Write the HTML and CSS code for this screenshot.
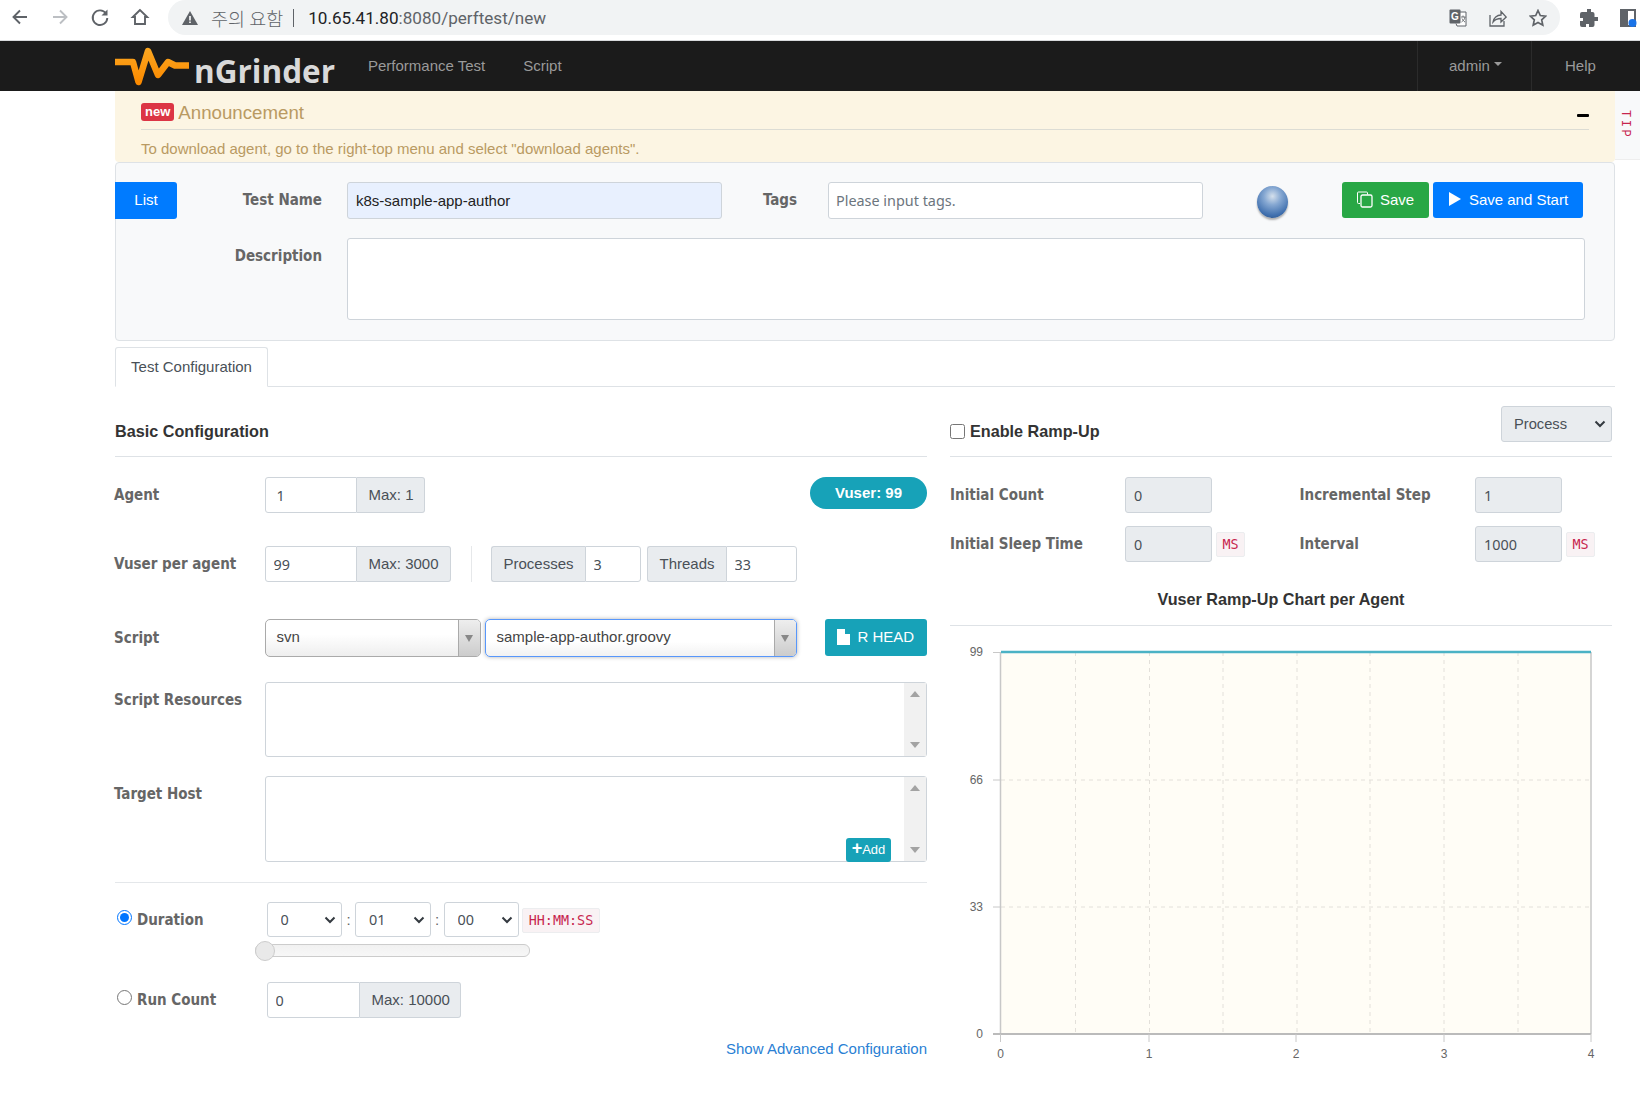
FILE: index.html
```html
<!DOCTYPE html>
<html lang="en">
<head>
    <meta charset="UTF-8">
    <title>nGrinder - Performance Test</title>
    <link rel="stylesheet" href="styles.css">
</head>
<body>
    <!-- Browser toolbar -->
    <div class="browser-bar">
        <svg class="tool" width="20" height="20" viewBox="0 0 20 20"><path d="M17 10H4M10 3.5 3.5 10l6.500 6.500" fill="none" stroke="#5f6368" stroke-width="1.900"/></svg>
        <svg class="tool" width="20" height="20" viewBox="0 0 20 20"><path d="M3 10h13M10 3.500l6.500 6.500-6.500 6.500" fill="none" stroke="#bcbfc3" stroke-width="1.900"/></svg>
        <svg class="tool" width="20" height="20" viewBox="0 0 20 20"><path d="M16 6.500A7.300 7.300 0 1 0 17.300 11" fill="none" stroke="#5f6368" stroke-width="1.900"/><path d="M17.500 2.500v6h-6z" fill="#5f6368"/></svg>
        <svg class="tool" width="20" height="20" viewBox="0 0 20 20"><path d="M10 3 2.800 10H5v7h10v-7h2.200z" fill="none" stroke="#5f6368" stroke-width="1.900"/></svg>
        <div class="address">
            <svg width="16" height="14" viewBox="0 0 16 14"><path d="M8 0 16 14H0z" fill="#5f6368"/><path d="M7.200 5h1.600v4.500H7.200zM7.200 10.500h1.600V12H7.200z" fill="#fff"/></svg>
            <span class="warn">주의 요함</span>
            <span class="sep"></span>
            <span class="url">10.65.41.80<span class="url-dim">:8080/perftest/new</span></span>
            <div class="address-icons">
                <svg width="18" height="18" viewBox="0 0 18 18"><path d="M11 3h6v14H8l-1-2.500" fill="#fff" stroke="#5f6368"/><rect x="0.500" y="0.500" width="11" height="14" rx="1" fill="#5f6368"/><text class="g-mark" x="6" y="11" text-anchor="middle">G</text><path d="M12 8h4.500M14 6.500V8M16 8c-.5 2.500-1.800 4-3.500 5M13 9.500c.6 1.500 1.500 2.600 3 3.500" fill="none" stroke="#5f6368" stroke-width="0.900"/></svg>
                <svg width="18" height="18" viewBox="0 0 18 18"><path d="M1 6v11h14v-5M4 13c.5-4 4-7 8-7V2.500L17.200 8 12 13V9.500c-3 0-6 1-8 3.500z" fill="none" stroke="#5f6368" stroke-width="1.300"/></svg>
                <svg width="18" height="18" viewBox="0 0 18 18"><path d="M9 1.500l2.300 5 5.400.6-4 3.700 1.100 5.400L9 13.500l-4.800 2.700 1.100-5.400-4-3.700 5.400-.6z" fill="none" stroke="#5f6368" stroke-width="1.700"/></svg>
            </div>
        </div>
        <div class="browser-end">
            <svg width="18" height="18" viewBox="0 0 18 18"><path d="M7 0h4v3h1.500a2 2 0 0 1 2 2v3h3.500v4h-3.500v4a2 2 0 0 1-2 2H9v-3H6v3H2a2 2 0 0 1-2-2v-4h3v-3H0V5a2 2 0 0 1 2-2h5z" fill="#5f6368"/></svg>
            <svg width="17" height="18" viewBox="0 0 17 18"><path d="M1 1h14v16H1z" fill="#fff" stroke="#5f6368" stroke-width="2"/><rect x="0" y="0" width="8" height="18" fill="#5f6368"/><circle cx="12.500" cy="14" r="4" fill="#1a73e8"/></svg>
        </div>
    </div>

    <!-- Navbar -->
    <div class="navbar">
        <svg class="logo-mark" width="76" height="44" viewBox="0 0 76 44"><defs><linearGradient id="logoGrad" x1="0" y1="0" x2="0" y2="1"><stop offset="0" stop-color="#fba51f"/><stop offset="1" stop-color="#fb8a00"/></linearGradient></defs><path d="M0 16H18L23.500 36 33 5 43 29 53 16 60 19.500H74" fill="none" stroke="url(#logoGrad)" stroke-width="6.500" stroke-linejoin="round"/></svg>
        <span class="logo-text">nGrinder</span>
        <a class="nav-link first">Performance Test</a>
        <a class="nav-link">Script</a>
        <div class="nav-right">
            <div class="nav-cell admin">admin<span class="caret"></span></div>
            <div class="nav-cell help">Help</div>
        </div>
    </div>

    <div class="page">
        <div class="top-row">
            <div class="notice">
                <div class="notice-head">
                    <span class="badge-new">new</span>
                    <span class="notice-title">Announcement</span>
                    <span class="collapse-bar"></span>
                </div>
                <div class="notice-text">To download agent, go to the right-top menu and select "download agents".</div>
            </div>
            <div class="tip">TIP</div>
        </div>

        <!-- Test name panel -->
        <div class="name-panel">
            <div class="name-row">
                <a class="btn btn-blue btn-list">List</a>
                <label class="name-label label-testname">Test Name</label>
                <input class="field field-name" type="text" value="k8s-sample-app-author">
                <label class="name-label label-tags">Tags</label>
                <input class="field field-tags" type="text" placeholder="Please input tags.">
                <span class="ball"></span>
                <a class="btn btn-green btn-save">
                    <svg width="16" height="17" viewBox="0 0 16 17"><path d="M3 12.500H1.500a1 1 0 0 1-1-1V2a1 1 0 0 1 1-1h8a1 1 0 0 1 1 1v1.500" fill="none" stroke="#fff"/><rect x="4" y="4" width="11" height="12" rx="1.500" fill="none" stroke="#fff" stroke-width="1.300"/></svg>
                    Save
                </a>
                <a class="btn btn-blue btn-start">
                    <svg width="14" height="14" viewBox="0 0 14 14"><path d="M1 0 13 7 1 14z" fill="#fff"/></svg>
                    Save and Start
                </a>
            </div>
            <div class="desc-row">
                <label class="name-label label-desc">Description</label>
                <textarea class="field field-desc"></textarea>
            </div>
        </div>

        <div class="tabs">
            <div class="tab">Test Configuration</div>
        </div>

        <div class="columns">
            <!-- Basic configuration -->
            <div class="col-left">
                <div class="section-head">Basic Configuration</div>

                <div class="form-row row-agent">
                    <label class="row-label">Agent</label>
                    <div class="group">
                        <input class="field in-w92 pad-11" type="text" value="1">
                        <span class="addon addon-agent">Max: 1</span>
                    </div>
                    <span class="vuser-pill">Vuser: 99</span>
                </div>

                <div class="form-row row-vuser">
                    <label class="row-label">Vuser per agent</label>
                    <div class="group">
                        <input class="field in-w92" type="text" value="99">
                        <span class="addon addon-vuser">Max: 3000</span>
                    </div>
                    <span class="v-divider"></span>
                    <div class="group">
                        <span class="addon addon-left addon-proc">Processes</span>
                        <input class="field in-w56" type="text" value="3">
                    </div>
                    <div class="group group-threads">
                        <span class="addon addon-left addon-thread">Threads</span>
                        <input class="field in-w71" type="text" value="33">
                    </div>
                </div>

                <div class="form-row row-script">
                    <label class="row-label">Script</label>
                    <div class="chosen chosen-svn">
                        <span class="chosen-text">svn</span>
                        <span class="chosen-arrow"></span>
                    </div>
                    <div class="chosen chosen-file">
                        <span class="chosen-text">sample-app-author.groovy</span>
                        <span class="chosen-arrow"></span>
                    </div>
                    <a class="btn btn-teal btn-head">
                        <svg width="13" height="16" viewBox="0 0 13 16"><path d="M0 0h8l5 5v11H0zM8 0v5h5" fill="#fff"/><path d="M8.500 0v4.500H13" fill="none" stroke="#17a2b8"/></svg>
                        R HEAD
                    </a>
                </div>

                <div class="form-row row-resources">
                    <label class="row-label label-top">Script Resources</label>
                    <div class="scroll-box box-resources">
                        <div class="scroll-strip"><span class="arrow-up"></span><span class="arrow-down"></span></div>
                    </div>
                </div>

                <div class="form-row row-host">
                    <label class="row-label label-top">Target Host</label>
                    <div class="scroll-box box-host">
                        <a class="btn-add"><b>+</b>Add</a>
                        <div class="scroll-strip"><span class="arrow-up"></span><span class="arrow-down"></span></div>
                    </div>
                </div>

                <div class="rule"></div>

                <div class="form-row row-duration">
                    <label class="radio-label"><input type="radio" name="mode" checked>Duration</label>
                    <span class="sel-wrap">
                        <select class="time-select"><option>0</option></select>
                        <svg class="chevron" width="12" height="8" viewBox="0 0 12 8"><path d="M1.500 1.500 6 6l4.500-4.500" fill="none" stroke="#343a40" stroke-width="2"/></svg>
                    </span>
                    <span class="colon">:</span>
                    <span class="sel-wrap">
                        <select class="time-select"><option>01</option></select>
                        <svg class="chevron" width="12" height="8" viewBox="0 0 12 8"><path d="M1.500 1.500 6 6l4.500-4.500" fill="none" stroke="#343a40" stroke-width="2"/></svg>
                    </span>
                    <span class="colon">:</span>
                    <span class="sel-wrap">
                        <select class="time-select"><option>00</option></select>
                        <svg class="chevron" width="12" height="8" viewBox="0 0 12 8"><path d="M1.500 1.500 6 6l4.500-4.500" fill="none" stroke="#343a40" stroke-width="2"/></svg>
                    </span>
                    <code class="unit unit-time">HH:MM:SS</code>
                </div>
                <div class="slider"><span class="slider-thumb"></span></div>

                <div class="form-row row-count">
                    <label class="radio-label"><input type="radio" name="mode">Run Count</label>
                    <div class="group">
                        <input class="field in-w93" type="text" value="0">
                        <span class="addon addon-count">Max: 10000</span>
                    </div>
                </div>

                <div class="advanced"><a>Show Advanced Configuration</a></div>
            </div>

            <!-- Ramp-up -->
            <div class="col-right">
                <div class="ramp-head">
                    <label class="ramp-check"><input type="checkbox">Enable Ramp-Up</label>
                    <span class="sel-wrap ramp-wrap">
                        <select class="ramp-select"><option>Process</option></select>
                        <svg class="chevron" width="12" height="8" viewBox="0 0 12 8"><path d="M1.500 1.500 6 6l4.500-4.500" fill="none" stroke="#343a40" stroke-width="2"/></svg>
                    </span>
                </div>

                <div class="ramp-row first-ramp">
                    <label class="ramp-label">Initial Count</label>
                    <input class="field ramp-input" type="text" value="0" disabled>
                    <span class="ramp-gap"></span>
                    <label class="ramp-label second">Incremental Step</label>
                    <input class="field ramp-input" type="text" value="1" disabled>
                </div>
                <div class="ramp-row">
                    <label class="ramp-label">Initial Sleep Time</label>
                    <input class="field ramp-input" type="text" value="0" disabled>
                    <code class="unit unit-ms">MS</code>
                    <span class="ramp-gap short"></span>
                    <label class="ramp-label second">Interval</label>
                    <input class="field ramp-input" type="text" value="1000" disabled>
                    <code class="unit unit-ms">MS</code>
                </div>

                <div class="chart-title">Vuser Ramp-Up Chart per Agent</div>
                <svg class="chart" width="662" height="450" viewBox="0 0 662 450">
                    <rect x="51" y="26" width="590" height="382" fill="#fffdf6"/>
                    <g stroke="#e3e0da" stroke-dasharray="4 4" fill="none">
                        <path d="M125.500 26V408M199.500 26V408M273 26V408M347 26V408M420 26V408M494 26V408M568 26V408"/>
                        <path d="M51 154H641M51 281H641"/>
                    </g>
                    <path d="M50.500 26V408M641 26V408" stroke="#c8c8c8" stroke-width="1.500" fill="none"/>
                    <path d="M43 408H641" stroke="#bbb" stroke-width="2" fill="none"/>
                    <path d="M43 26.500H51M43 154H51M43 281H51M50.500 408v8M199 408v8M346 408v8M494 408v8M641 408v8" stroke="#c8c8c8" fill="none"/>
                    <path d="M51 26H641" stroke="#4bb2c5" stroke-width="2.500" fill="none"/>
                    <g class="chart-text">
                        <text x="33" y="30" text-anchor="end">99</text>
                        <text x="33" y="158" text-anchor="end">66</text>
                        <text x="33" y="285" text-anchor="end">33</text>
                        <text x="33" y="412" text-anchor="end">0</text>
                        <text x="50.500" y="432" text-anchor="middle">0</text>
                        <text x="199" y="432" text-anchor="middle">1</text>
                        <text x="346" y="432" text-anchor="middle">2</text>
                        <text x="494" y="432" text-anchor="middle">3</text>
                        <text x="641" y="432" text-anchor="middle">4</text>
                    </g>
                </svg>
            </div>
        </div>
    </div>
</body>
</html>
```

FILE: styles.css
```css
/* Page base */
* {
    box-sizing: border-box;
}

html, body {
    margin: 0;
    padding: 0;
    background-color: #fff;
}

body {
    width: 1640px;
    height: 1097px;
    overflow: hidden;
    font-family: "Liberation Sans", Arial, sans-serif;
    font-size: 15px;
    color: #495057;
}

/* Browser toolbar */
.browser-bar {
    display: flex;
    align-items: flex-start;
    height: 41px;
    padding-left: 10px;
    border-bottom: 1px solid #d8dadd;
    background-color: #fff;
}

.tool {
    margin: 7px 20px 0 0;
}

.address {
    display: flex;
    align-items: center;
    width: 1392px;
    height: 35px;
    margin-left: -2px;
    padding-left: 14px;
    border-radius: 0 0 18px 18px;
    border-top-left-radius: 18px;
    border-top-right-radius: 18px;
    background-color: #f1f3f4;
}

.warn {
    margin-left: 13px;
    font-family: "Noto Sans CJK KR", sans-serif;
    font-size: 18.500px;
    font-weight: 300;
    color: #5f6368;
}

.sep {
    width: 1px;
    height: 18px;
    margin: 0 14px 0 10px;
    background-color: #5f6368;
}

.url {
    font-family: "Roboto", sans-serif;
    font-size: 17.100px;
    color: #202124;
}

.url-dim {
    color: #5f6368;
}

.address-icons {
    display: flex;
    gap: 22px;
    margin-left: auto;
    margin-right: 13px;
}

.g-mark {
    font-family: "Liberation Sans", Arial, sans-serif;
    font-size: 10px;
    font-weight: 700;
    fill: #fff;
}

.browser-end {
    display: flex;
    align-items: center;
    gap: 22px;
    height: 35px;
    margin-left: 20px;
}

/* Navbar */
.navbar {
    display: flex;
    align-items: center;
    height: 50px;
    padding-left: 115px;
    background-color: #1b1b1b;
}

.logo-mark {
    margin-top: 3px;
}

.logo-text {
    margin-left: 3px;
    margin-top: 9px;
    font-family: "Open Sans", sans-serif;
    font-weight: 700;
    font-size: 31.500px;
    line-height: 40px;
    color: #d9d9d9;
}

.nav-link {
    padding-bottom: 2px;
    font-size: 15px;
    color: #9a9a9a;
    margin-left: 38px;
}

.nav-link.first {
    margin-left: 33px;
}

.nav-right {
    display: flex;
    height: 100%;
    margin-left: auto;
}

.nav-cell {
    display: flex;
    align-items: center;
    height: 100%;
    padding-bottom: 2px;
    font-size: 15px;
    color: #9a9a9a;
}

.admin {
    width: 115px;
    padding-left: 31px;
    border-left: 1px solid #2b2b2b;
    border-right: 1px solid #2b2b2b;
}

.help {
    width: 108px;
    padding-left: 33px;
}

.caret {
    width: 0;
    height: 0;
    margin: -3px 0 0 4px;
    border-left: 4px solid transparent;
    border-right: 4px solid transparent;
    border-top: 4px solid #9a9a9a;
}

/* Main page */
.page {
    margin-left: 115px;
    width: 1525px;
}

.top-row {
    display: flex;
}

.notice {
    width: 1500px;
    height: 71px;
    padding: 0 26px;
    background-color: #fcf5e3;
    border-radius: 0 0 4px 4px;
}

.notice-head {
    display: flex;
    align-items: center;
    height: 39px;
    padding-top: 3px;
    border-bottom: 1px solid #dcdcd4;
}

.badge-new {
    padding: 0 4px;
    height: 18px;
    line-height: 18px;
    border-radius: 3px;
    background-color: #dc3545;
    color: #fff;
    font-size: 13px;
    font-weight: 700;
}

.notice-title {
    margin-left: 4px;
    margin-top: 3px;
    font-size: 18.700px;
    color: #b99a62;
}

.collapse-bar {
    width: 12px;
    height: 3px;
    margin-top: 7px;
    margin-left: auto;
    background-color: #000;
    border-radius: 1px;
}

.notice-text {
    margin-top: 9px;
    font-size: 15px;
    line-height: 20px;
    color: #b99a62;
}

.tip {
    width: 25px;
    height: 69px;
    padding: 19px 8px 0 0;
    background-color: #f8f9fa;
    border-bottom: 1px solid #eee;
    writing-mode: vertical-rl;
    font-family: "Liberation Mono", monospace;
    font-size: 12px;
    letter-spacing: 2.500px;
    color: #c7254e;
}

/* Name panel */
.name-panel {
    width: 1500px;
    height: 179px;
    padding-top: 19px;
    background-color: #f8f9fa;
    border: 1px solid #dee2e6;
    border-radius: 4px;
}

.name-row {
    display: flex;
    align-items: flex-start;
}

.name-label {
    font-family: "DejaVu Sans Condensed", "DejaVu Sans", sans-serif;
    font-weight: 700;
    font-size: 15px;
    line-height: 22px;
    color: #666;
    text-align: right;
}

.label-testname {
    width: 145px;
    margin-top: 7px;
    margin-right: 25px;
}

.label-tags {
    width: 36px;
    margin: 7px 31px 0 39px;
}

.label-desc {
    width: 206px;
    margin-top: 7px;
    margin-right: 25px;
}

.desc-row {
    display: flex;
    margin-top: 19px;
}

.field {
    height: 36px;
    padding: 0 8px;
    border: 1px solid #ced4da;
    border-radius: 3px;
    background-color: #fff;
    font-family: "Noto Sans", sans-serif;
    font-size: 14.400px;
    color: #495057;
    outline: none;
}

.field::placeholder {
    color: #6c757d;
}

.field-name {
    width: 375px;
    height: 37px;
    background-color: #e8f0fe;
    font-family: "Liberation Sans", Arial, sans-serif;
    font-size: 15px;
    color: #222;
}

.field-tags {
    width: 375px;
    height: 37px;
    padding-left: 7px;
}

.field-desc {
    width: 1238px;
    height: 82px;
    resize: none;
}

.ball {
    width: 31px;
    height: 32px;
    margin: 4px 54px 0 54px;
    border-radius: 50%;
    background: radial-gradient(circle at 50% 32%, #d5e0ec 0%, #86a8d2 32%, #3f6fae 72%, #2a4a78 100%);
    box-shadow: 0 2px 2px rgba(0, 0, 0, 0.3);
}

.btn {
    display: flex;
    align-items: center;
    justify-content: center;
    padding-bottom: 2px;
    color: #fff;
    border-radius: 3px;
    font-size: 15px;
}

.btn-blue {
    background-color: #007bff;
}

.btn-green {
    background-color: #28a745;
}

.btn-teal {
    background-color: #17a2b8;
}

.btn-list {
    width: 62px;
    height: 37px;
    margin-left: -1px;
    border-radius: 0 3px 3px 0;
}

.btn-save {
    width: 87px;
    height: 36px;
    gap: 7px;
    margin-right: 4px;
}

.btn-start {
    width: 150px;
    height: 36px;
    gap: 7px;
}

/* Tabs */
.tabs {
    display: flex;
    width: 1500px;
    height: 40px;
    margin-top: 6px;
    border-bottom: 1px solid #dee2e6;
}

.tab {
    width: 153px;
    height: 40px;
    line-height: 38px;
    text-align: center;
    font-size: 15px;
    color: #495057;
    background-color: #fff;
    border: 1px solid #dee2e6;
    border-bottom-color: #fff;
    border-radius: 3px 3px 0 0;
}

/* Columns */
.columns {
    display: flex;
}

.col-left {
    width: 812px;
}

.col-right {
    width: 662px;
    margin-left: 23px;
}

.section-head {
    height: 70px;
    padding-top: 32px;
    border-bottom: 1px solid #dee2e6;
    font-size: 16.200px;
    font-weight: 700;
    line-height: 24px;
    color: #333;
}

.form-row {
    display: flex;
    align-items: center;
}

.row-label {
    width: 150.500px;
    margin-left: -1px;
    flex: none;
    font-family: "DejaVu Sans Condensed", "DejaVu Sans", sans-serif;
    font-weight: 700;
    font-size: 15px;
    color: #666;
}

.label-top {
    align-self: flex-start;
    margin-top: 9px;
}

.row-agent {
    height: 36px;
    margin-top: 20px;
}

.row-vuser {
    height: 36px;
    margin-top: 33px;
}

.row-script {
    height: 38px;
    margin-top: 37px;
}

.row-resources {
    height: 75px;
    margin-top: 25px;
}

.row-host {
    height: 86px;
    margin-top: 19px;
}

.row-duration {
    height: 35px;
    margin-top: 19px;
}

.row-count {
    height: 36px;
    margin-top: 25px;
}

.group {
    display: flex;
}

.group .field {
    border-radius: 0 3px 3px 0;
}

.group .field:first-child {
    border-radius: 3px 0 0 3px;
}

.in-w92 {
    width: 92px;
}

.in-w93 {
    width: 93px;
}

.in-w56 {
    width: 56px;
}

.in-w71 {
    width: 71.500px;
}

.pad-11 {
    padding-left: 11px;
}

.addon {
    display: flex;
    align-items: center;
    height: 36px;
    padding: 0 0 2px 12px;
    background-color: #e9ecef;
    border: 1px solid #ced4da;
    border-left: none;
    border-radius: 0 3px 3px 0;
    font-size: 15px;
    color: #495057;
}

.addon-left {
    border-left: 1px solid #ced4da;
    border-right: none;
    border-radius: 3px 0 0 3px;
}

.addon-agent {
    width: 68px;
}

.addon-vuser {
    width: 94px;
}

.addon-proc {
    width: 94px;
}

.addon-thread {
    width: 79px;
}

.addon-count {
    width: 101px;
}

.group-threads {
    margin-left: 6px;
}

.vuser-pill {
    width: 117px;
    height: 32px;
    line-height: 32px;
    align-self: flex-start;
    margin-left: auto;
    border-radius: 16px;
    background-color: #17a2b8;
    color: #fff;
    text-align: center;
    font-weight: 700;
    font-size: 15px;
}

.v-divider {
    width: 1px;
    height: 36px;
    margin: 0 19px 0 20px;
    background-color: #e6e8ea;
}

/* Chosen style dropdowns */
.chosen {
    display: flex;
    align-items: center;
    height: 38px;
    border: 1px solid #aaa;
    border-radius: 5px;
    background: linear-gradient(#fff 40%, #eee 100%);
    overflow: hidden;
}

.chosen-svn {
    width: 216px;
    margin-right: 4px;
}

.chosen-file {
    width: 312px;
    border-color: #5897fb;
    box-shadow: 0 0 4px rgba(0, 0, 0, 0.3);
    background: linear-gradient(#fff 60%, #f2f2f2 100%);
}

.chosen-text {
    flex: 1;
    padding: 0 0 3px 11px;
    font-size: 15px;
    color: #444;
}

.chosen-arrow {
    position: relative;
    width: 22px;
    height: 100%;
    border-left: 1px solid #aaa;
    background: linear-gradient(#eee, #ccc);
}

.chosen-arrow::after {
    content: "";
    position: absolute;
    left: 6px;
    top: 15px;
    border-left: 4px solid transparent;
    border-right: 4px solid transparent;
    border-top: 7px solid #888;
}

.btn-head {
    width: 102.500px;
    height: 37px;
    gap: 7px;
    margin-left: auto;
    align-self: flex-start;
}

/* Text boxes with scrollbar */
.scroll-box {
    position: relative;
    display: flex;
    justify-content: flex-end;
    width: 662.500px;
    height: 100%;
    border: 1px solid #ced4da;
    border-radius: 3px;
    background-color: #fff;
}

.scroll-strip {
    display: flex;
    flex-direction: column;
    justify-content: space-between;
    align-items: center;
    width: 22px;
    height: 100%;
    padding: 8px 0;
    background-color: #f1f1f1;
}

.arrow-up {
    border-left: 5px solid transparent;
    border-right: 5px solid transparent;
    border-bottom: 6px solid #a3a3a3;
}

.arrow-down {
    border-left: 5px solid transparent;
    border-right: 5px solid transparent;
    border-top: 6px solid #a3a3a3;
}

.btn-add {
    position: absolute;
    right: 35px;
    bottom: -1px;
    width: 45px;
    height: 24px;
    line-height: 24px;
    text-align: center;
    border-radius: 3px;
    background-color: #17a2b8;
    color: #fff;
    font-size: 13px;
}

.btn-add b {
    font-size: 18px;
    line-height: 20px;
}

.rule {
    height: 1px;
    margin-top: 20px;
    background-color: #e4e7ea;
}

/* Duration */
.radio-label {
    display: flex;
    align-items: center;
    width: 151.500px;
    height: 24px;
    flex: none;
    font-family: "DejaVu Sans Condensed", "DejaVu Sans", sans-serif;
    font-weight: 700;
    font-size: 15px;
    color: #666;
}

.radio-label input {
    width: 15px;
    height: 15px;
    margin: -5px 5px 0 2px;
}

.sel-wrap {
    position: relative;
    display: block;
    height: 35px;
}

.chevron {
    position: absolute;
    right: 6px;
    top: 14px;
    pointer-events: none;
}

.time-select {
    display: block;
    width: 75.500px;
    height: 35px;
    padding-left: 13px;
    appearance: none;
    border: 1px solid #ced4da;
    border-radius: 3px;
    background-color: #fff;
    font-family: "Noto Sans", sans-serif;
    font-size: 14.400px;
    color: #495057;
}

.colon {
    width: 13px;
    text-align: center;
    color: #666;
}

.unit {
    display: block;
    height: 25px;
    line-height: 24px;
    text-align: center;
    font-family: "DejaVu Sans Mono", monospace;
    font-size: 13.400px;
    color: #c7254e;
    background-color: #f9f2f4;
    border: 1px solid #ecedef;
    border-radius: 2px;
}

.unit-time {
    width: 78px;
    margin-left: 3px;
    margin-top: 2px;
}

.unit-ms {
    width: 29px;
    margin-left: 4px;
    margin-top: 1px;
}

.slider {
    position: relative;
    width: 275px;
    height: 13px;
    margin: 7px 0 0 140px;
    border: 1px solid #ccc;
    border-radius: 6px;
    background: linear-gradient(#f1f1f1, #f7f7f7);
}

.slider-thumb {
    position: absolute;
    left: -1px;
    top: -4px;
    width: 20px;
    height: 20px;
    border-radius: 50%;
    border: 1px solid #ccc;
    background-color: #e9e9e9;
}

.advanced {
    margin-top: 21px;
    line-height: 20px;
    text-align: right;
    font-size: 15px;
    color: #2a7fd4;
}

/* Ramp-up */
.ramp-head {
    display: flex;
    align-items: flex-start;
    height: 70px;
    border-bottom: 1px solid #dee2e6;
}

.ramp-check {
    display: flex;
    align-items: center;
    margin-top: 32px;
    font-size: 16.200px;
    font-weight: 700;
    line-height: 24px;
    color: #333;
}

.ramp-check input {
    width: 15px;
    height: 15px;
    margin: 0 5px 0 0;
}

.ramp-wrap {
    height: 36px;
    margin: 19px 0 0 auto;
}

.ramp-select {
    display: block;
    width: 111px;
    height: 36px;
    padding-left: 12px;
    appearance: none;
    border: 1px solid #ced4da;
    border-radius: 3px;
    background-color: #e9ecef;
    font-family: "Liberation Sans", Arial, sans-serif;
    font-size: 14.700px;
    color: #495057;
}

.ramp-row {
    display: flex;
    align-items: center;
    height: 36px;
    margin-top: 13px;
}

.first-ramp {
    margin-top: 20px;
}

.ramp-label {
    width: 175px;
    flex: none;
    font-family: "DejaVu Sans Condensed", "DejaVu Sans", sans-serif;
    font-weight: 700;
    font-size: 15px;
    color: #666;
}

.ramp-label.second {
    width: 175.500px;
}

.ramp-input {
    width: 87px;
    background-color: #e9ecef;
}

.ramp-gap {
    width: 87.500px;
}

.ramp-gap.short {
    width: 54.500px;
}

.chart-title {
    margin-top: 25px;
    padding-bottom: 14px;
    border-bottom: 1px solid #dee2e6;
    line-height: 24px;
    text-align: center;
    font-size: 16.200px;
    font-weight: 700;
    color: #333;
}

.chart {
    display: block;
}

.chart-text text {
    font-family: "Liberation Sans", Arial, sans-serif;
    font-size: 12px;
    fill: #666;
}
```
